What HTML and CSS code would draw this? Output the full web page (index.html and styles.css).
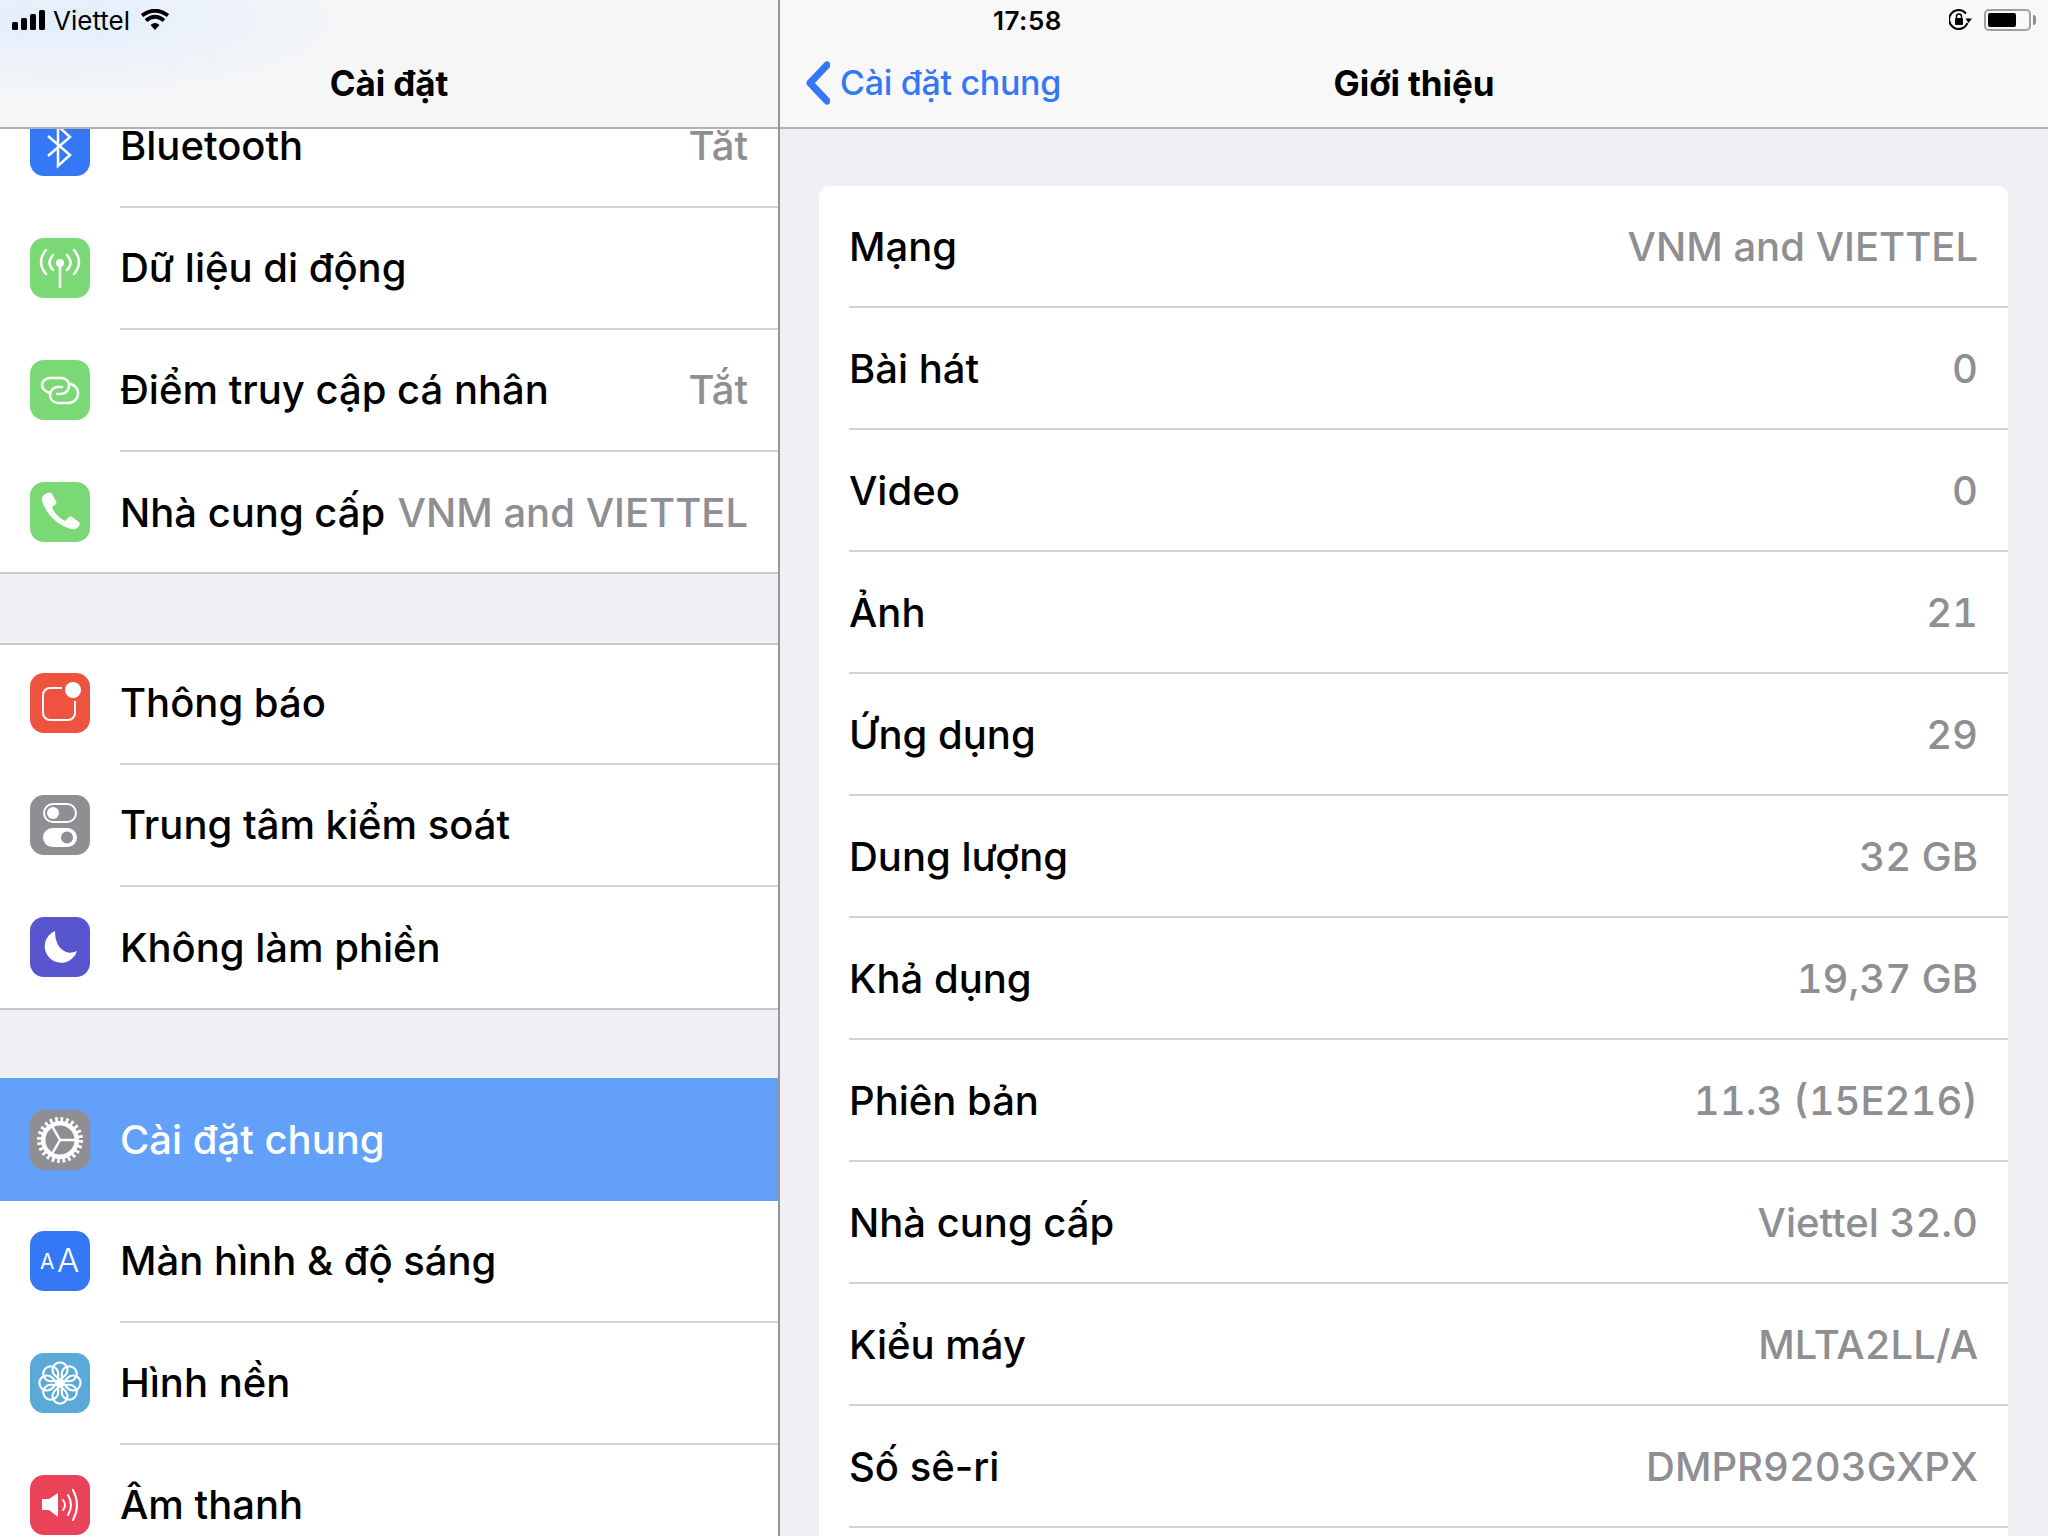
FILE: index.html
```html
<!DOCTYPE html>
<html lang="vi">
<head>
    <meta charset="UTF-8">
    <title>Cài đặt</title>
    <link rel="stylesheet" href="styles.css">
</head>
<body>
    <div class="screen">
        <div class="master">
            <header class="nav nav-left">
                <div class="status">
                    <svg class="signal" width="34" height="20" viewBox="0 0 34 20"><rect x="0" y="12" width="6" height="8" rx="1.5"/><rect x="9" y="8" width="6" height="12" rx="1.5"/><rect x="18" y="4" width="6" height="16" rx="1.5"/><rect x="27" y="0" width="6" height="20" rx="1.5"/></svg>
                    <span class="carrier">Viettel</span>
                    <svg class="wifi" width="30" height="22" viewBox="0 0 30 22"><path d="M15 21 L10.5 16 Q15 12 19.500 16Z" fill="#000"/><path d="M6 11.500 Q15 4 24 11.500 M2 6.500 Q15 -3 28 6.500" fill="none" stroke="#000" stroke-width="4"/></svg>
                </div>
                <h1 class="nav-title">Cài đặt</h1>
            </header>
            <div class="list">
                <div class="group group-first">
                    <div class="row">
                        <svg class="icon" viewBox="0 0 60 60"><rect width="60" height="60" rx="14" fill="#3478f6"/><path d="M18 20 L40 39 L28 50 V10 L40 21 L18 40" fill="none" stroke="#fff" stroke-width="2.500"/></svg>
                        <div class="row-body"><span>Bluetooth</span><span class="value">Tắt</span></div>
                    </div>
                    <div class="row">
                        <svg class="icon" viewBox="0 0 60 60"><rect width="60" height="60" rx="14" fill="#7ad975"/><g fill="none" stroke="#fff" stroke-width="2.500" stroke-linecap="round"><path d="M30 25 V49 M23 17 Q16 25 23 32 M37 17 Q44 25 37 32 M16 12 Q6 24 16 36 M44 12 Q54 24 44 36"/></g><circle cx="30" cy="25" r="4" fill="#fff"/></svg>
                        <div class="row-body"><span>Dữ liệu di động</span></div>
                    </div>
                    <div class="row">
                        <svg class="icon" viewBox="0 0 60 60"><rect width="60" height="60" rx="14" fill="#7ad975"/><g fill="none" stroke="#fff" stroke-width="2.500" stroke-linecap="round"><path d="M20 33 C14 31 12 28 12 25 C12 21 16 18 20 18 H31 C36 18 40 22 39 27 C38 32 34 34 30 34 H27"/><path d="M41 24 C46 26 48 30 48 33 C48 39 44 43 38 43 H28 C23 43 20 39 20 35 C20 30 24 27 28 27 H32"/></g></svg>
                        <div class="row-body"><span>Điểm truy cập cá nhân</span><span class="value">Tắt</span></div>
                    </div>
                    <div class="row row-last">
                        <svg class="icon" viewBox="0 0 60 60"><rect width="60" height="60" rx="14" fill="#7ad975"/><path d="M18 11 C20 10 21 11 22 12 L26 19 C27 21 26 22 25 23 L22 25 C24 31 29 36 35 39 L38 36 C39 35 41 34 42 35 L49 40 C50 41 50 42 49 44 C47 47 44 48 41 47 C27 43 16 32 12 19 C11 15 14 12 18 11Z" fill="#fff"/></svg>
                        <div class="row-body"><span>Nhà cung cấp</span><span class="value">VNM and VIETTEL</span></div>
                    </div>
                </div>

                <div class="group group-second">
                    <div class="row row-first">
                        <svg class="icon" viewBox="0 0 60 60"><rect width="60" height="60" rx="14" fill="#ee5340"/><path d="M32 15 H20 a7 7 0 0 0 -7 7 V40 a7 7 0 0 0 7 7 H38 a7 7 0 0 0 7 -7 V28" fill="none" stroke="#fff" stroke-width="2"/><circle cx="43" cy="17" r="8" fill="#fff"/></svg>
                        <div class="row-body"><span>Thông báo</span></div>
                    </div>
                    <div class="row">
                        <svg class="icon" viewBox="0 0 60 60"><rect width="60" height="60" rx="14" fill="#8e8e93"/><rect x="14" y="9" width="32" height="18" rx="9" fill="none" stroke="#fff" stroke-width="2"/><circle cx="23" cy="18" r="6" fill="#fff"/><rect x="13" y="33" width="34" height="19" rx="9.500" fill="#fff"/><circle cx="37" cy="42.500" r="6" fill="#8e8e93"/></svg>
                        <div class="row-body"><span>Trung tâm kiểm soát</span></div>
                    </div>
                    <div class="row row-last">
                        <svg class="icon" viewBox="0 0 60 60"><rect width="60" height="60" rx="14" fill="#5856ce"/><path d="M25 14 A16.500 16.500 0 1 0 47 34 Q41 37 36 35 Q25 30 25 14Z" fill="#fff"/></svg>
                        <div class="row-body"><span>Không làm phiền</span></div>
                    </div>
                </div>

                <div class="group group-third">
                    <div class="row row-selected">
                        <svg class="icon" viewBox="0 0 60 60"><rect width="60" height="60" rx="14" fill="#8e8e93"/><g fill="none" stroke="#fff"><circle cx="30" cy="30" r="20.500" stroke-width="5" stroke-dasharray="2.680 2.680"/><circle cx="30" cy="30" r="16.800" stroke-width="4.500"/><path d="M30 30 H46 M30 30 L22 16 M30 30 L22 44" stroke-width="2.500"/></g></svg>
                        <div class="row-body"><span>Cài đặt chung</span></div>
                    </div>
                    <div class="row">
                        <svg class="icon" viewBox="0 0 60 60"><rect width="60" height="60" rx="14" fill="#3478f6"/><text class="aa-small" x="10" y="38">A</text><text class="aa-big" x="27" y="41">A</text></svg>
                        <div class="row-body"><span>Màn hình &amp; độ sáng</span></div>
                    </div>
                    <div class="row">
                        <svg class="icon" viewBox="0 0 60 60"><rect width="60" height="60" rx="14" fill="#5aa9d8"/><g fill="none" stroke="#fff" stroke-width="2.200">
                            <path d="M30 27 L25 22.500 A7.500 7.500 0 1 1 35 22.500Z"/>
                            <path d="M30 27 L25 22.500 A7.500 7.500 0 1 1 35 22.500Z" transform="rotate(45 30 30)"/>
                            <path d="M30 27 L25 22.500 A7.500 7.500 0 1 1 35 22.500Z" transform="rotate(90 30 30)"/>
                            <path d="M30 27 L25 22.500 A7.500 7.500 0 1 1 35 22.500Z" transform="rotate(135 30 30)"/>
                            <path d="M30 27 L25 22.500 A7.500 7.500 0 1 1 35 22.500Z" transform="rotate(180 30 30)"/>
                            <path d="M30 27 L25 22.500 A7.500 7.500 0 1 1 35 22.500Z" transform="rotate(225 30 30)"/>
                            <path d="M30 27 L25 22.500 A7.500 7.500 0 1 1 35 22.500Z" transform="rotate(270 30 30)"/>
                            <path d="M30 27 L25 22.500 A7.500 7.500 0 1 1 35 22.500Z" transform="rotate(315 30 30)"/>
                        </g><circle cx="30" cy="30" r="3.500" fill="#fff"/></svg>
                        <div class="row-body"><span>Hình nền</span></div>
                    </div>
                    <div class="row">
                        <svg class="icon" viewBox="0 0 60 60"><rect width="60" height="60" rx="14" fill="#ea4359"/><path d="M12 24 H19 L28 18 V42 L19 35 H12Z" fill="#fff"/><path d="M33 25 Q37 30 33 35 M38 20 Q44 30 38 40 M43 15 Q51 30 43 45" fill="none" stroke="#fff" stroke-width="2" stroke-linecap="round"/></svg>
                        <div class="row-body"><span>Âm thanh</span></div>
                    </div>
                </div>
            </div>
        </div>

        <div class="detail">
            <header class="nav nav-right">
                <div class="status status-right">
                    <span class="time">17:58</span>
                    <div class="status-icons">
                        <svg width="24" height="22" viewBox="0 0 24 22"><path d="M17 4.500 A9.500 9.500 0 1 0 18.500 14" fill="none" stroke="#000" stroke-width="2"/><path d="M16.500 9.500 L23 9.500 L19.500 14Z" fill="#000"/><rect x="6" y="9" width="8" height="7" rx="1" fill="#000"/><path d="M7.500 9 V7.500 a2.500 2.500 0 0 1 5 0 V9" fill="none" stroke="#000" stroke-width="1.500"/></svg>
                        <div class="battery"><div class="battery-level"></div></div>
                    </div>
                </div>
                <a class="back">
                    <svg width="26" height="44" viewBox="0 0 26 44"><path d="M23 4 L6 22 L23 40" fill="none" stroke="#3478f6" stroke-width="7" stroke-linecap="round" stroke-linejoin="round"/></svg>
                    <span>Cài đặt chung</span>
                </a>
                <h1 class="nav-title">Giới thiệu</h1>
            </header>
            <div class="card">
                <div class="info-row"><span>Mạng</span><span class="value">VNM and VIETTEL</span></div>
                <div class="info-row"><span>Bài hát</span><span class="value">0</span></div>
                <div class="info-row"><span>Video</span><span class="value">0</span></div>
                <div class="info-row"><span>Ảnh</span><span class="value">21</span></div>
                <div class="info-row"><span>Ứng dụng</span><span class="value">29</span></div>
                <div class="info-row"><span>Dung lượng</span><span class="value">32 GB</span></div>
                <div class="info-row"><span>Khả dụng</span><span class="value">19,37 GB</span></div>
                <div class="info-row"><span>Phiên bản</span><span class="value">11.3 (15E216)</span></div>
                <div class="info-row"><span>Nhà cung cấp</span><span class="value">Viettel 32.0</span></div>
                <div class="info-row"><span>Kiểu máy</span><span class="value">MLTA2LL/A</span></div>
                <div class="info-row"><span>Số sê-ri</span><span class="value">DMPR9203GXPX</span></div>
            </div>
        </div>
    </div>
</body>
</html>
```

FILE: styles.css
```css
html, body {
    margin: 0;
    height: 100%;
}
body {
    font-family: Inter, "Noto Sans", sans-serif;
    font-size: 40px;
    font-weight: 500;
    color: #000;
    background-color: #efeff4;
    overflow: hidden;
}
.screen {
    display: flex;
    height: 1536px;
    overflow: hidden;
}
.master {
    width: 778px;
    flex-shrink: 0;
    border-right: 2px solid #95959a;
    position: relative;
    overflow: hidden;
}
.detail {
    flex: 1;
    min-width: 0;
}

/* top bars */
.nav {
    position: relative;
    z-index: 1;
    height: 127px;
    border-bottom: 2px solid #b2b2b4;
    background-color: #f8f8f8;
}
.nav-left {
    background: radial-gradient(ellipse 420px 110px at 60px 20px, #e2eefc, #f5f6f7 70%, #f6f6f6);
}
.nav-title {
    margin: 0;
    position: absolute;
    left: 0;
    right: 0;
    top: 60px;
    text-align: center;
    font-size: 35px;
    line-height: 46px;
    font-weight: 700;
    letter-spacing: -0.1px;
}
.status {
    display: flex;
    align-items: center;
    height: 40px;
    padding-left: 12px;
}
.signal {
    margin-right: 7px;
}
.carrier {
    font-size: 26px;
    font-weight: 400;
    margin-right: 10px;
}
.status-right {
    padding-left: 213px;
    position: relative;
}
.time {
    font-size: 26px;
    font-weight: 600;
    letter-spacing: 0.5px;
}
.status-icons {
    position: absolute;
    right: 17px;
    top: 9px;
    display: flex;
    align-items: center;
    gap: 11px;
}
.battery {
    width: 47px;
    height: 22px;
    border: 2px solid #a0a0a4;
    border-radius: 5px;
    padding: 2px;
    box-sizing: border-box;
    position: relative;
}
.battery::after {
    content: "";
    position: absolute;
    right: -7px;
    top: 4px;
    width: 3px;
    height: 10px;
    background-color: #8e8e93;
    border-radius: 0 3px 3px 0;
}
.battery-level {
    width: 28px;
    height: 100%;
    background-color: #000;
    border-radius: 2px;
}
.back {
    position: absolute;
    left: 24px;
    top: 60px;
    display: flex;
    align-items: center;
    gap: 10px;
    color: #3478f6;
    font-size: 34px;
    font-weight: 500;
    letter-spacing: -0.3px;
    line-height: 46px;
    z-index: 1;
}

/* left list */
.list {
    margin-top: -44px;
}
.group {
    background-color: #fff;
    border-bottom: 2px solid #c8c7cc;
}
.group-first .row-last {
    margin-bottom: -1px;
}
.group-first .row-body {
    height: calc(100% + 1px);
}
.group-second {
    margin-top: 69px;
    border-top: 2px solid #c8c7cc;
}
.group-second .row-body,
.group-third .row-body {
    height: calc(100% + 2px);
}
.group-third {
    margin-top: 68px;
    border-bottom: 0;
}
.row {
    display: flex;
    align-items: center;
    height: 122px;
    padding-left: 30px;
}
.row-first {
    margin-top: -3px;
}
.icon {
    width: 60px;
    height: 60px;
    flex-shrink: 0;
    margin-right: 30px;
}
.aa-small {
    font-size: 21px;
    font-weight: 400;
    fill: #fff;
}
.aa-big {
    font-size: 33px;
    font-weight: 300;
    fill: #fff;
}
.row-body {
    flex: 1;
    min-width: 0;
    height: 100%;
    box-sizing: border-box;
    display: flex;
    align-items: center;
    justify-content: space-between;
    padding-right: 30px;
    border-bottom: 2px solid #d3d3d6;
}
.row-last .row-body {
    border-bottom: 0;
}
.value {
    color: #8e8e93;
    font-variant-numeric: tabular-nums;
}
.row-selected {
    height: 123px;
    margin-bottom: -1px;
    background-color: #62a0f9;
    color: #fff;
}
.row-selected .row-body {
    border-bottom: 0;
}

/* right card */
.card {
    margin: 57px 40px 0 39px;
    padding: 0 0 40px 30px;
    background-color: #fff;
    border-radius: 10px;
}
.info-row {
    display: flex;
    align-items: center;
    justify-content: space-between;
    height: 122px;
    box-sizing: border-box;
    padding-right: 30px;
    border-bottom: 2px solid #d3d3d6;
}
```
